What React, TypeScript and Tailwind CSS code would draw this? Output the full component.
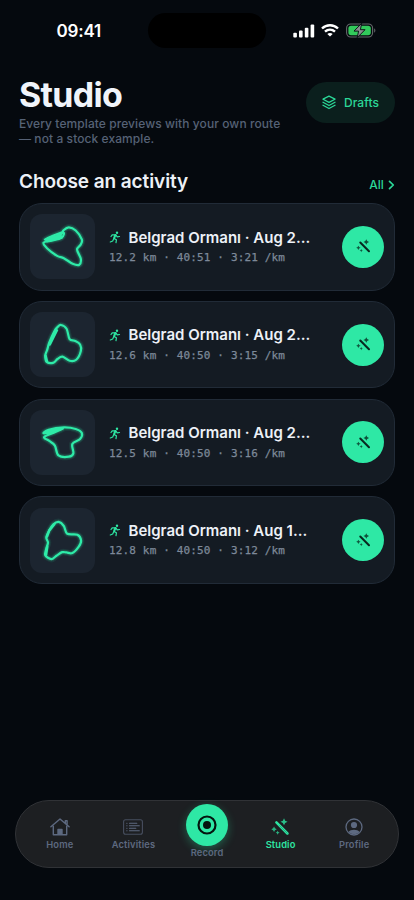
import type { ReactNode } from "react";

type Point = [number, number];

interface Activity {
  id: number;
  title: string;
  stats: string;
  route: Point[];
  overlap: string;
}

const ACTIVITIES: Activity[] = [
  {
    id: 1,
    title: "Belgrad Ormanı · Aug 2...",
    stats: "12.2 km · 40:51 · 3:21 /km",
    route: [[15, 25], [22, 23.5], [30, 20.5], [33, 16], [38.3, 13.2], [45, 16.3], [51, 25], [50, 30], [46.3, 35], [50, 44], [48.5, 50], [42, 49], [33.3, 43.5], [26.7, 41.2], [17, 34], [13.3, 28.3], [20, 26.5], [31, 23.5], [32, 18]],
    overlap: "M16 25.2L30 21.2L31 23.2L17 26.5Z",
  },
  {
    id: 2,
    title: "Belgrad Ormanı · Aug 2...",
    stats: "12.6 km · 40:50 · 3:15 /km",
    route: [[16.7, 49.3], [15, 43], [17, 37], [19, 30], [24, 19], [27, 15], [30.5, 12.8], [36, 16.5], [39, 26.8], [44, 28.3], [49.3, 32], [50, 38.7], [45.5, 47], [39, 48], [32, 44], [27, 46.3], [23.3, 49.8]],
    overlap: "M15.3 43L16.8 49M19.5 32L26.5 18",
  },
  {
    id: 3,
    title: "Belgrad Ormanı · Aug 2...",
    stats: "12.5 km · 40:50 · 3:16 /km",
    route: [[14, 23], [18.3, 19.5], [33.3, 17.2], [45, 18.7], [51, 22.7], [49.3, 28.5], [41.7, 33.4], [42.7, 42.7], [38.3, 46], [28, 44.7], [24.5, 35], [19, 30.5], [14, 26.5], [25, 21.7], [32, 18.2]],
    overlap: "M15 22.5L20 20L28 19L19 23Z",
  },
  {
    id: 4,
    title: "Belgrad Ormanı · Aug 1...",
    stats: "12.8 km · 40:50 · 3:12 /km",
    route: [[21, 50.3], [15, 46.5], [16, 40], [17.7, 34], [16, 29], [19, 22], [23, 16], [28.3, 13.7], [33.3, 17.7], [36.7, 25.3], [46.7, 26.3], [50.3, 32], [48, 38], [41.7, 44.3], [36, 43.8], [31.7, 43.5], [26, 47]],
    overlap: "M15.8 46L17 38M16.8 28L19 22L24 16",
  },
];

// Closed Catmull-Rom spline through the route points
function toPath(pts: Point[]) {
  const n = pts.length;
  let d = `M${pts[0][0]} ${pts[0][1]}`;
  for (let i = 0; i < n; i++) {
    const p0 = pts[(i - 1 + n) % n];
    const p1 = pts[i];
    const p2 = pts[(i + 1) % n];
    const p3 = pts[(i + 2) % n];
    d += `C${p1[0] + (p2[0] - p0[0]) / 6} ${p1[1] + (p2[1] - p0[1]) / 6} ${p2[0] - (p3[0] - p1[0]) / 6} ${p2[1] - (p3[1] - p1[1]) / 6} ${p2[0]} ${p2[1]}`;
  }
  return d + "Z";
}

function WandIcon({ className }: { className?: string }) {
  return (
    <svg viewBox="0 0 20 20" className={className} fill="currentColor">
      <path d="M5.7 4.7L17.3 16.3" fill="none" stroke="currentColor" strokeWidth="2.7" strokeLinecap="round" />
      <path d="M9 8L17 16" fill="none" stroke="#18242a" strokeOpacity="0.4" strokeWidth="0.8" strokeLinecap="round" />
      <path fillOpacity="0.8" d="M13.7 0.3L14.9 2.8L17.4 4L14.9 5.2L13.7 7.7L12.5 5.2L10 4L12.5 2.8Z" />
      <path fillOpacity="0.75" d="M3.2 8.9L4.2 10.8L6.1 11.8L4.2 12.8L3.2 14.7L2.2 12.8L0.3 11.8L2.2 10.8Z" />
      <path fillOpacity="0.75" d="M7 13.3L7.7 14.7L9.1 15.4L7.7 16.1L7 17.5L6.3 16.1L4.9 15.4L6.3 14.7Z" />
    </svg>
  );
}

function RunIcon() {
  return (
    <svg viewBox="0 0 12 13" className="h-[13px] w-3 shrink-0 text-[#2ee6a3]" fill="none" stroke="currentColor" strokeWidth="1.2" strokeLinecap="round" strokeLinejoin="round">
      <circle cx="8" cy="1.7" r="1.2" fill="currentColor" stroke="none" />
      <path d="M6.4 4L5.1 7.2" strokeWidth="2" />
      <path d="M5.9 3.8L3.2 3.8L2 5.5M7 4.2L8.2 5.9L10.5 5.5M5.2 7.4L7.4 8.8L7 11.7M4.6 8L3.7 10L1.3 11" />
    </svg>
  );
}

function StatusBar() {
  return (
    <div className="grid h-[62px] grid-cols-[148px_118px_1fr] pt-[13px]">
      <div className="pl-[56.5px] pt-[6px] text-[17px] leading-6 font-semibold tracking-[-0.2px] text-white">09:41</div>
      <div className="h-[35px] rounded-full bg-black" />
      <div className="flex h-[35px] items-center pl-[27px]">
        <svg viewBox="0 0 22 14" className="h-[14px] w-[22px] text-white" fill="currentColor">
          <rect x="0.3" y="8.8" width="3.6" height="4.7" rx="1" />
          <rect x="6" y="6.5" width="3.6" height="7" rx="1" />
          <rect x="11.8" y="3.7" width="3.6" height="9.8" rx="1" />
          <rect x="17.6" y="0.5" width="3.6" height="13" rx="1" />
        </svg>
        <svg viewBox="0 0 18 13" className="ml-[6px] h-[13px] w-[18px]" fill="none" stroke="white" strokeWidth="2.4">
          <path d="M1 4.5C5.5 0.1 12.5 0.1 17 4.5M4 7.7C6.9 5 11.1 5 14 7.7" />
          <path d="M9 12.5L6.3 9.9C7.8 8.6 10.2 8.6 11.7 9.9Z" fill="white" stroke="none" />
        </svg>
        <svg viewBox="0 0 30 15" className="ml-[7px] h-[15px] w-[30px]">
          <rect x="0.6" y="1" width="26" height="13" rx="4.2" fill="none" stroke="#65686b" strokeWidth="1.1" />
          <rect x="2.4" y="2.8" width="22.4" height="9.4" rx="2.7" fill="#32c95b" />
          <path d="M28.2 5.3C29.8 6 29.8 9 28.2 9.7Z" fill="#65686b" />
          <path d="M15.7 0.3L8 8.1H12.6L11.2 14.7L19 6.7H14.4Z" fill="#8a8d8f" stroke="#05090e" strokeWidth="0.9" />
        </svg>
      </div>
    </div>
  );
}

function ActivityCard({ activity }: { activity: Activity }) {
  return (
    <li className="flex h-[87.5px] items-center rounded-[23px] border border-[#212b37] bg-[#141b23] px-[10px]">
      <div className="size-[65px] shrink-0 rounded-[12px] bg-[#1c2530]">
        <svg viewBox="0 0 64 64" className="size-full" fill="none" stroke="#2eeba8" strokeLinejoin="round" strokeLinecap="round">
          <path d={toPath(activity.route)} strokeOpacity="0.09" strokeWidth="6.5" />
          <path d={toPath(activity.route)} strokeOpacity="0.17" strokeWidth="4.4" />
          <path d={toPath(activity.route)} strokeWidth="2.2" />
          <path d={activity.overlap} strokeWidth="2.5" />
        </svg>
      </div>
      <div className="ml-[14px] min-w-0 flex-1">
        <div className="flex items-center gap-[7.5px]">
          <RunIcon />
          <span className="text-[15px] leading-5 font-semibold whitespace-nowrap text-[#edf1f7]">{activity.title}</span>
        </div>
        <div className="mt-[2.5px] font-['DejaVu_Sans_Mono',monospace] text-[11px] leading-4 tracking-[0.15px] whitespace-pre text-[#7d8999] [-webkit-text-stroke:0.25px]">{activity.stats}</div>
      </div>
      <button className="flex size-[42px] shrink-0 items-center justify-center rounded-full bg-[#2ee8a5] text-[#07291f]">
        <WandIcon className="size-[15px]" />
      </button>
    </li>
  );
}

function NavItem({ label, active, children }: { label: string; active?: boolean; children: ReactNode }) {
  return (
    <a className={`flex w-[73.6px] flex-col items-center pt-[15.5px] ${active ? "text-[#2ee6a3]" : "text-[#5d6980]"}`}>
      <span className="flex h-[21px] items-center">{children}</span>
      <span className="text-[9.3px] leading-[13px] font-semibold tracking-[0.15px]">{label}</span>
    </a>
  );
}

export default function App() {
  return (
    <div className="flex h-[900px] w-[414px] flex-col overflow-hidden bg-[#05090e] font-[Inter,sans-serif]">
      <StatusBar />

      <header className="flex justify-between px-[19px]">
        <div className="pt-[14px]">
          <h1 className="text-[34px] leading-[38px] font-bold tracking-[-0.7px] text-[#f0f4fa]">Studio</h1>
          <p className="mt-[2px] text-[12px] leading-[15px] font-medium tracking-[0.08px] text-[#566276]">
            Every template previews with your own route
            <br />— not a stock example.
          </p>
        </div>
        <button className="mt-[20px] flex h-[41px] w-[89px] items-center justify-center gap-2 rounded-full bg-[#0b1f1d] text-[12px] font-medium tracking-[0.1px] text-[#2bd898]">
          <svg viewBox="0 0 14 15" className="h-[15px] w-[14px]" fill="none" stroke="currentColor" strokeWidth="1.3" strokeLinejoin="round" strokeLinecap="round">
            <path d="M7 1.1L13 4.2L7 7.4L1 4.2ZM1 7.3L7 10.5L13 7.3M1 10.3L7 13.5L13 10.3" />
          </svg>
          Drafts
        </button>
      </header>

      <main className="px-[19px] pt-[23px]">
        <div className="flex h-[34px] items-start justify-between">
          <h2 className="text-[19px] leading-[26px] font-semibold tracking-[-0.08px] text-[#edf1f7]">Choose an activity</h2>
          <a className="flex items-center gap-[4px] pt-[5.5px] text-[12px] leading-[20px] font-medium tracking-[0.1px] text-[#2bd898]">
            All
            <svg viewBox="0 0 7 10" className="h-[10px] w-[7px]" fill="none" stroke="currentColor" strokeWidth="1.7" strokeLinecap="round" strokeLinejoin="round">
              <path d="M1.5 1.3L5.3 5L1.5 8.7" />
            </svg>
          </a>
        </div>
        <ul className="flex flex-col gap-[10.3px]">
          {ACTIVITIES.map((a) => (
            <ActivityCard key={a.id} activity={a} />
          ))}
        </ul>
      </main>

      <nav className="mx-[15px] mt-auto mb-[32px] flex h-[68px] shrink-0 justify-center rounded-full border border-[#303236] bg-[#1d1f22]">
        <NavItem label="Home">
          <svg viewBox="0 0 20 18" className="h-[18px] w-5" fill="none" stroke="currentColor" strokeWidth="1.4" strokeLinecap="round" strokeLinejoin="round">
            <path d="M0.9 8.8L10 1L19.1 8.8M3.3 8.2V16.7H16.7V8.2M15.3 5V2.7H17.1V6.7" />
            <path d="M8 16.3V11.5H12V16.3Z" fill="currentColor" />
          </svg>
        </NavItem>
        <NavItem label="Activities">
          <svg viewBox="0 0 20 16" className="h-4 w-5" fill="none" stroke="currentColor" strokeLinecap="round">
            <rect x="0.6" y="0.8" width="18.8" height="14.4" rx="2" strokeOpacity="0.65" strokeWidth="1.1" />
            <path d="M6.5 4.2H13.8M6.5 6.8H16.3M6.5 9.3H12.8M6.5 11.8H16.3M3.8 4.2H4M3.8 6.8H4M3.8 9.3H4M3.8 11.8H4" strokeWidth="1.1" />
          </svg>
        </NavItem>
        <a className="flex w-[73.6px] flex-col items-center pt-[3px] text-[#5d6980]">
          <span className="flex size-[42px] items-center justify-center rounded-full bg-[#2ee8a5] shadow-[0_3px_10px_rgba(46,232,165,0.32)]">
            <svg viewBox="0 0 20 20" className="size-5 text-[#04150f]">
              <circle cx="10" cy="10" r="8.5" fill="none" stroke="currentColor" strokeWidth="2.2" />
              <circle cx="10" cy="10" r="4" fill="currentColor" />
            </svg>
          </span>
          <span className="text-[9.3px] leading-[13px] font-semibold tracking-[0.15px]">Record</span>
        </a>
        <NavItem label="Studio" active>
          <WandIcon className="size-[19px]" />
        </NavItem>
        <NavItem label="Profile">
          <svg viewBox="0 0 18 18" className="size-[18px]">
            <circle cx="9" cy="9" r="8" fill="none" stroke="currentColor" strokeWidth="1.3" />
            <circle cx="9" cy="7" r="3.1" fill="currentColor" />
            <path d="M3.5 14.1C5.4 10.9 12.6 10.9 14.5 14.1C11.5 17 6.5 17 3.5 14.1Z" fill="currentColor" />
          </svg>
        </NavItem>
      </nav>
    </div>
  );
}
